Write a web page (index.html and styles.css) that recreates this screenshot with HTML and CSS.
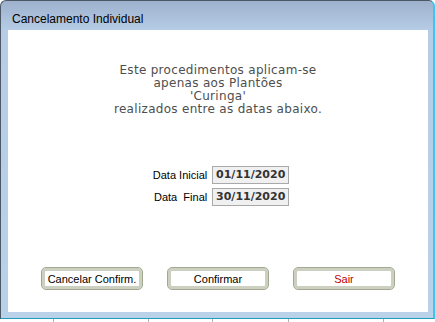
FILE: index.html
```html
<!DOCTYPE html>
<html lang="pt-BR">
<head>
  <meta charset="UTF-8" />
  <title>Cancelamento Individual</title>
  <link rel="stylesheet" href="styles.css">
</head>
<body>
  <div class="window">
    <div class="titlebar">Cancelamento Individual</div>
    <div class="client">
      <p class="message">
        Este procedimentos aplicam-se<br>
        apenas aos Plantões<br>
        'Curinga'<br>
        realizados entre as datas abaixo.
      </p>

      <div class="dates">
        <label class="date-label">Data Inicial</label>
        <span class="date-box">01/11/2020</span>
        <label class="date-label">Data&nbsp; Final</label>
        <span class="date-box">30/11/2020</span>
      </div>

      <div class="buttons">
        <button class="btn">Cancelar Confirm.</button>
        <button class="btn">Confirmar</button>
        <button class="btn btn-exit">Sair</button>
      </div>
    </div>
  </div>
  <div class="grid-edge">
    <span class="tick t1"></span>
    <span class="tick t2"></span>
    <span class="tick t3"></span>
    <span class="tick t4"></span>
    <span class="tick t5"></span>
  </div>
</body>
</html>
```

FILE: styles.css
```css
body {
  margin: 0;
  background: #fff;
  font-family: 'Liberation Sans', Arial, sans-serif;
  overflow: hidden;
}
.window {
  box-sizing: border-box;
  width: 435px;
  height: 319px;
  border: 1px solid #4d5866;
  border-right: 2px solid #3cc8ee;
  border-bottom: 1px solid #1e9cb8;
  border-radius: 6px 6px 0 0;
  background: linear-gradient(#9db1cd 0, #b7cde7 30px, #bad1ea 100%);
  padding: 0 5px 6px 7px;
  display: flex;
  flex-direction: column;
}
.titlebar {
  height: 29px;
  box-sizing: border-box;
  padding: 11px 0 0 4px;
  font-size: 12px;
  line-height: 14px;
  color: #000;
}
.client {
  flex: 1;
  background: #fff;
  display: flex;
  flex-direction: column;
  align-items: center;
}
.message {
  margin: 34px 0 0;
  font-family: 'DejaVu Sans', Verdana, sans-serif;
  font-size: 12px;
  line-height: 13px;
  letter-spacing: 0.3px;
  color: #4e4e4e;
  text-align: center;
}
.dates {
  margin: 50px 0 0 6px;
  display: grid;
  grid-template-columns: auto auto;
  column-gap: 5px;
  row-gap: 4px;
  align-items: center;
}
.date-label {
  font-size: 11px;
  color: #000;
  text-align: right;
}
.date-box {
  box-sizing: border-box;
  width: 77px;
  height: 18px;
  border: 1px solid #a9a9a9;
  background: #f0f0f0;
  font-family: 'DejaVu Sans', Verdana, sans-serif;
  font-weight: bold;
  font-size: 11px;
  line-height: 16px;
  color: #333;
  text-align: center;
}
.buttons {
  margin-top: 61px;
  display: flex;
  gap: 24px;
}
.btn {
  box-sizing: border-box;
  width: 102px;
  height: 23px;
  padding: 0;
  border: 1px solid #a3a893;
  border-radius: 5px;
  box-shadow: inset 0 0 0 3px #ccd0c1;
  background: #fff;
  font-family: 'Liberation Sans', Arial, sans-serif;
  font-size: 11px;
  color: #000;
}
.btn-exit {
  color: #c00000;
}
.grid-edge {
  position: relative;
  height: 3px;
}
.tick {
  position: absolute;
  top: 0;
  width: 1px;
  height: 3px;
  background: #b0b0b0;
}
.t1 { left: 53px; }
.t2 { left: 148px; }
.t3 { left: 212px; }
.t4 { left: 288px; }
.t5 { left: 383px; }
```
